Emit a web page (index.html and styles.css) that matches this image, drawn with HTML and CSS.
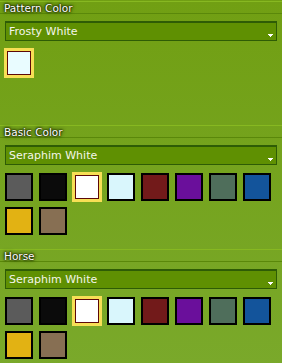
FILE: index.html
```html
<!DOCTYPE html>
<html lang="en">
<head>
  <meta charset="UTF-8" />
  <title>Horse Colors</title>
  <link rel="stylesheet" href="styles.css">
</head>
<body>
  <div class="panel">

    <div class="section">
      <div class="heading">Pattern Color</div>
      <div class="dropdown">
        <span>Frosty White</span>
        <svg class="arrow" width="5" height="3" viewBox="0 0 5 3"><path d="M0 0h5v1H4v1H3v1H2V2H1V1H0z" fill="#fff"/></svg>
      </div>
      <div class="swatches">
        <div class="swatch selected" style="background:#e9fcff"></div>
      </div>
    </div>

    <div class="section">
      <div class="heading">Basic Color</div>
      <div class="dropdown">
        <span>Seraphim White</span>
        <svg class="arrow" width="5" height="3" viewBox="0 0 5 3"><path d="M0 0h5v1H4v1H3v1H2V2H1V1H0z" fill="#fff"/></svg>
      </div>
      <div class="swatches">
        <div class="swatch" style="background:#5b5b5b"></div>
        <div class="swatch" style="background:#0b0b0b"></div>
        <div class="swatch selected" style="background:#ffffff"></div>
        <div class="swatch" style="background:#d9f6fc"></div>
        <div class="swatch" style="background:#721a1a"></div>
        <div class="swatch" style="background:#6a0f9b"></div>
        <div class="swatch" style="background:#4f6e5b"></div>
        <div class="swatch" style="background:#13549b"></div>
        <div class="swatch" style="background:#e2b213"></div>
        <div class="swatch" style="background:#876f53"></div>
      </div>
    </div>

    <div class="section">
      <div class="heading">Horse</div>
      <div class="dropdown">
        <span>Seraphim White</span>
        <svg class="arrow" width="5" height="3" viewBox="0 0 5 3"><path d="M0 0h5v1H4v1H3v1H2V2H1V1H0z" fill="#fff"/></svg>
      </div>
      <div class="swatches">
        <div class="swatch" style="background:#5b5b5b"></div>
        <div class="swatch" style="background:#0b0b0b"></div>
        <div class="swatch selected" style="background:#ffffff"></div>
        <div class="swatch" style="background:#d9f6fc"></div>
        <div class="swatch" style="background:#721a1a"></div>
        <div class="swatch" style="background:#6a0f9b"></div>
        <div class="swatch" style="background:#4f6e5b"></div>
        <div class="swatch" style="background:#13549b"></div>
        <div class="swatch" style="background:#e2b213"></div>
        <div class="swatch" style="background:#876f53"></div>
      </div>
    </div>

  </div>
</body>
</html>
```

FILE: styles.css
```css
body {
  margin: 0;
  font-family: 'DejaVu Sans', Verdana, sans-serif;
  background: linear-gradient(#719f13, #7aa92b);
  min-height: 363px;
  color: #fff;
}

.panel {
  width: 282px;
  padding-top: 1px;
}

.section {
  height: 124px;
}

.heading {
  box-sizing: border-box;
  height: 13px;
  border-top: 1px solid #87b821;
  border-bottom: 1px solid #5a880a;
  padding-left: 4px;
  font-size: 10.5px;
  line-height: 13px;
  white-space: nowrap;
  text-shadow: 0 0 1px #142000, 0 0 2px #142000, 0 0 3px #1e2e00, 0 0 4px #2a3d00;
}

.dropdown {
  box-sizing: border-box;
  display: flex;
  justify-content: space-between;
  height: 20px;
  margin: 7px 5px 0;
  padding: 0 3px 0 3px;
  background: #5f9002;
  border: 1px solid #2e5c05;
  border-top-width: 2px;
  font-size: 11px;
  line-height: 17px;
  color: #f4f6ea;
}

.arrow {
  align-self: flex-end;
  margin-bottom: 3px;
}

.swatches {
  display: grid;
  grid-template-columns: repeat(8, 28px);
  gap: 6px;
  margin: 8px 0 0 5px;
}

.swatch {
  box-sizing: border-box;
  width: 28px;
  height: 28px;
  border: 2px solid #000;
}

.swatch.selected {
  border-color: #f7df55;
  box-shadow: 0 0 0 1px #f7df55, inset 0 0 0 1px #5c0808;
}
```
